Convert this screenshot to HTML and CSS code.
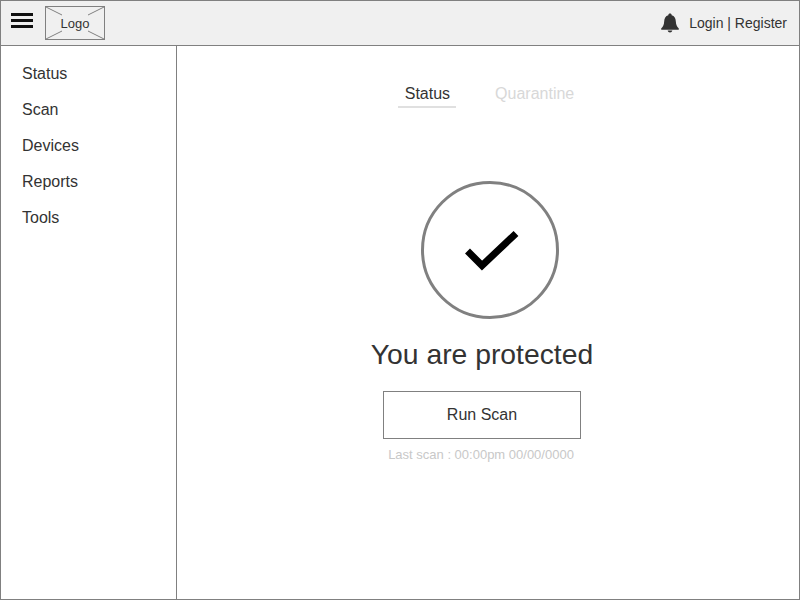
FILE: index.html
```html
<!DOCTYPE html>
<html lang="en">
  <head>
    <meta charset="UTF-8" />
    <title>Status</title>
    <link rel="stylesheet" href="styles.css">
  </head>
  <body>
    <div class="frame">
      <header class="topbar">
        <div class="menu-icon"><span></span><span></span><span></span></div>
        <div class="logo">
          <svg class="logo-cross" width="58" height="32" viewBox="0 0 58 32">
            <path d="M0 0L16 8M58 0L42 8M0 32L16 24M58 32L42 24" />
          </svg>
          <span class="logo-text">Logo</span>
        </div>
        <div class="account">
          <svg class="bell" width="18" height="20" viewBox="0 0 18 20">
            <path d="M9 .5C8 .5 7.300 1.200 7.300 2.200 4.500 3 3.300 5.200 3.200 8.200 3 11.800 2 13.700.4 15.200c-.5.500-.3 1.600.6 1.600h16c.9 0 1.100-1.100.6-1.600C16 13.700 15 11.800 14.800 8.200 14.700 5.200 13.500 3 10.700 2.200 10.700 1.200 10 .5 9 .5z" />
            <path d="M6.700 17.500h4.600C11.100 18.700 10.200 19.400 9 19.400s-2.100-.7-2.300-1.900z" />
          </svg>
          <span>Login | Register</span>
        </div>
      </header>
      <div class="body-row">
        <nav class="sidebar">
          <a href="#">Status</a>
          <a href="#">Scan</a>
          <a href="#">Devices</a>
          <a href="#">Reports</a>
          <a href="#">Tools</a>
        </nav>
        <main class="content">
          <div class="tabs">
            <div class="tab active">Status</div>
            <div class="tab">Quarantine</div>
          </div>
          <div class="status-circle">
            <svg width="60" height="50" viewBox="0 0 60 50">
              <path d="M7.500 26L22 40.500L56 8.500" />
            </svg>
          </div>
          <h1>You are protected</h1>
          <button class="scan-btn">Run Scan</button>
          <p class="last-scan">Last scan : 00:00pm 00/00/0000</p>
        </main>
      </div>
    </div>
  </body>
</html>
```

FILE: styles.css
```css
* {
  box-sizing: border-box;
  margin: 0;
  padding: 0;
}
body {
  font-family: "Liberation Sans", Arial, sans-serif;
  color: #333;
  background: #fff;
}
.frame {
  width: 800px;
  height: 600px;
  border: 1px solid #808080;
  display: flex;
  flex-direction: column;
  overflow: hidden;
}
.topbar {
  height: 45px;
  flex: none;
  background: #f0f0f0;
  border-bottom: 1px solid #808080;
  display: flex;
  align-items: center;
  padding: 0 12px 0 10px;
}
.menu-icon {
  width: 22px;
  display: flex;
  flex-direction: column;
  gap: 3px;
  margin-right: 12px;
  margin-top: -5px;
}
.menu-icon span {
  display: block;
  height: 3px;
  background: #111;
}
.logo {
  width: 60px;
  height: 34px;
  border: 1px solid #808080;
  position: relative;
  display: flex;
  align-items: center;
  justify-content: center;
}
.logo-cross {
  position: absolute;
  left: 0;
  top: 0;
}
.logo-cross path {
  stroke: #808080;
  stroke-width: 1;
  fill: none;
}
.logo-text {
  font-size: 13px;
}
.account {
  margin-left: auto;
  display: flex;
  align-items: center;
  gap: 10px;
  font-size: 14px;
}
.bell {
  fill: #333;
}
.body-row {
  flex: 1;
  display: flex;
}
.sidebar {
  width: 176px;
  flex: none;
  border-right: 1px solid #808080;
  padding-top: 10px;
  display: flex;
  flex-direction: column;
}
.sidebar a {
  height: 36px;
  line-height: 36px;
  padding-left: 21px;
  font-size: 16px;
  color: #333;
  text-decoration: none;
}
.content {
  flex: 1;
  display: flex;
  flex-direction: column;
  align-items: center;
  padding: 35px 12px 0 0;
}
.tabs {
  display: flex;
  gap: 32px;
  margin-left: 15px;
  margin-bottom: 73px;
}
.tab {
  font-size: 16px;
  line-height: 25px;
  height: 27px;
  padding: 0 7px;
  color: #d8d8d8;
}
.tab.active {
  color: #333;
  padding-right: 6px;
  border-bottom: 2px solid #e0e0e0;
}
.status-circle {
  width: 138px;
  height: 138px;
  border: 3px solid #808080;
  border-radius: 50%;
  display: flex;
  align-items: center;
  justify-content: center;
  margin-left: 15px;
  margin-bottom: 17px;
}
.status-circle path {
  fill: none;
  stroke: #000;
  stroke-width: 7;
}
h1 {
  font-size: 28.3px;
  font-weight: 400;
  line-height: 36px;
  margin-bottom: 19px;
}
.scan-btn {
  width: 198px;
  height: 48px;
  background: #fff;
  border: 1px solid #808080;
  font-family: inherit;
  font-size: 16px;
  color: #333;
  margin-bottom: 7px;
}
.last-scan {
  font-size: 13px;
  line-height: 17px;
  color: #c8c8c8;
  margin-right: 2px;
}
```
